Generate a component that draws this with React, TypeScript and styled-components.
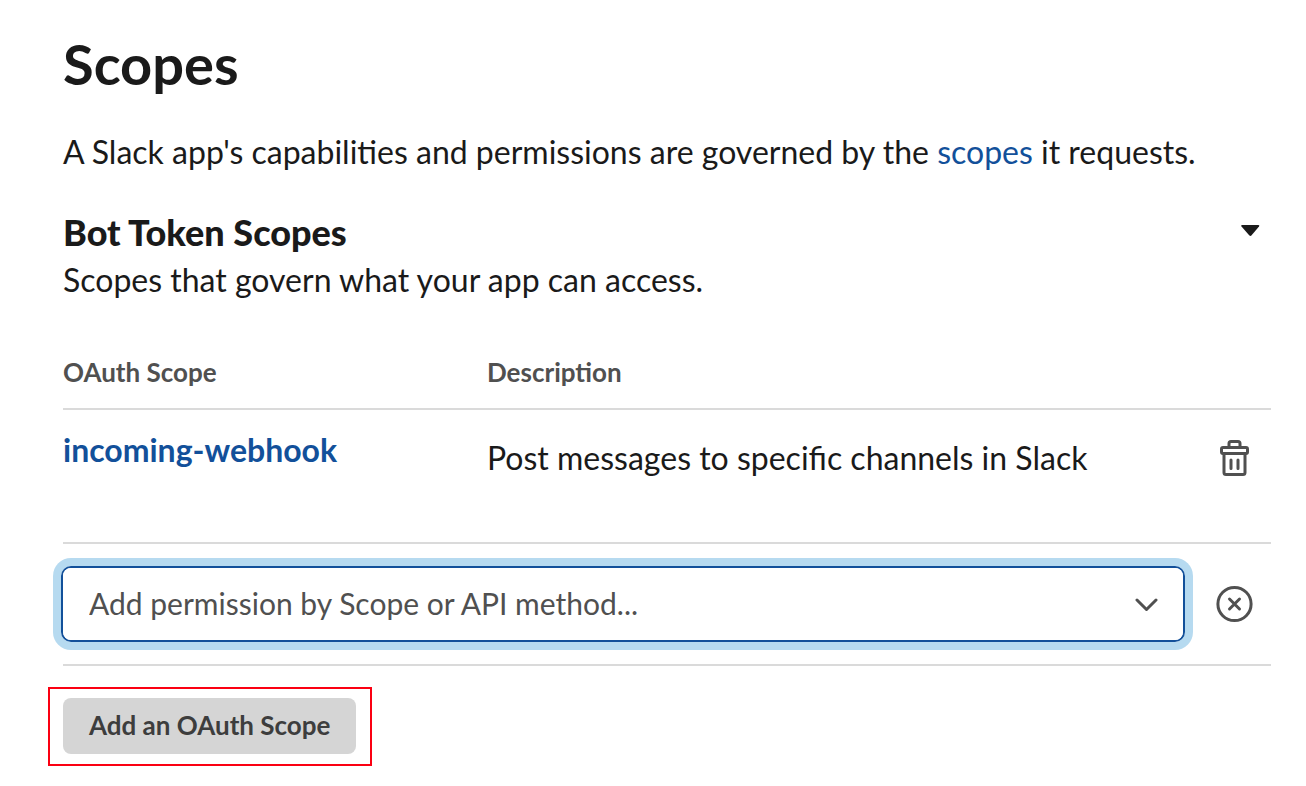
import React from "react";
import styled, { createGlobalStyle } from "styled-components";

const GlobalStyle = createGlobalStyle`
  * { box-sizing: border-box; }
  body {
    margin: 0;
    background: #fff;
    color: #1a1a1a;
    font-family: Lato, "Open Sans", sans-serif;
    font-size: 32px;
    line-height: 48px;
  }
`;

const Page = styled.main`
  padding: 28px 35px 20px 63px;
`;

const Title = styled.h1`
  margin: 0;
  font-size: 56px;
  line-height: 72px;
  font-weight: 700;
`;

const Text = styled.p`
  margin: 0;
`;

const Intro = styled(Text)`
  margin-top: 28px;
`;

const Link = styled.a<{ $strong?: boolean }>`
  color: #12509a;
  text-decoration: none;
  font-weight: ${(p) => (p.$strong ? 700 : 400)};
`;

const SectionHeader = styled.div`
  display: flex;
  align-items: center;
  justify-content: space-between;
  margin-top: 32px;
  padding-right: 11px;
`;

const SectionTitle = styled.h2`
  margin: 0;
  font-size: 36px;
  line-height: 48px;
  font-weight: 900;
`;

const IconButton = styled.button`
  display: inline-flex;
  padding: 0;
  border: 0;
  background: none;
  color: #505050;
  vertical-align: top;
  cursor: pointer;
`;

const CollapseButton = styled(IconButton)`
  padding-bottom: 2px;
`;

const Table = styled.table`
  width: 100%;
  margin-top: 44px;
  table-layout: fixed;
  border-collapse: separate;
  border-spacing: 0;
`;

const HeaderCell = styled.th<{ $width?: number }>`
  width: ${(p) => (p.$width ? `${p.$width}px` : "auto")};
  height: 62px;
  padding: 0 0 12px;
  border-bottom: 2px solid #dadada;
  color: #505050;
  font-size: 26px;
  line-height: 32px;
  font-weight: 700;
  text-align: left;
`;

const Cell = styled.td<{ $top: number; $height: number; $center?: boolean }>`
  height: ${(p) => p.$height}px;
  padding: ${(p) => p.$top}px 0 0;
  border-bottom: 2px solid #dadada;
  vertical-align: top;
  text-align: ${(p) => (p.$center ? "center" : "left")};
`;

const SelectBox = styled.div`
  display: grid;
  align-items: center;
  margin: 0 12px 0 -2px;
  border: 2px solid #12509a;
  border-radius: 10px;
  box-shadow: 0 0 0 8px #b6daf0;
  color: #505050;

  > * {
    grid-area: 1 / 1;
  }
  > svg {
    justify-self: end;
    margin: 2px 24px 0 0;
    pointer-events: none;
  }
`;

const Select = styled.select`
  width: 100%;
  height: 72px;
  padding: 0 64px 2px 26px;
  border: 0;
  border-radius: 8px;
  outline: 0;
  appearance: none;
  background: #fff;
  color: inherit;
  font: inherit;
  font-size: 30px;
`;

const Highlight = styled.div`
  width: fit-content;
  margin: 21px 0 0 -15px;
  padding: 9px 14px 10px 13px;
  border: 2px solid #fb0012;
`;

const AddButton = styled.button`
  display: block;
  height: 56px;
  padding: 0 26px 2px;
  border: 0;
  border-radius: 8px;
  background: #d5d5d5;
  color: #3d3d3d;
  font: inherit;
  font-size: 26px;
  line-height: 32px;
  font-weight: 700;
  cursor: pointer;
`;

const CaretIcon = () => (
  <svg width="20" height="12" viewBox="0 0 20 12" aria-hidden="true">
    <path d="M2 0H18.4Q20 0 19 1.6L11.6 10.3Q10.4 11.5 9.2 10.3L1.5 1.6Q0.5 0 2 0Z" fill="#1a1a1a" />
  </svg>
);

const TrashIcon = () => (
  <svg width="30" height="36" viewBox="0 0 30 36" fill="none" stroke="currentColor" strokeWidth="3" strokeLinecap="round" strokeLinejoin="round" aria-hidden="true">
    <path d="M10 6.5V3.5Q10 1.5 12 1.5H19Q21 1.5 21 3.5V6.5" />
    <rect x="2.5" y="7.5" width="26" height="6" rx="1.5" />
    <path d="M5 14V32.5Q5 34.5 7 34.5H24Q26 34.5 26 32.5V14" />
    <path d="M12 20V28.5M19 20V28.5" />
  </svg>
);

const ChevronIcon = () => (
  <svg width="24" height="14" viewBox="0 0 24 14" fill="none" stroke="currentColor" strokeWidth="3" strokeLinecap="round" strokeLinejoin="round" aria-hidden="true">
    <path d="M2 2L11.5 11.5L21 2" />
  </svg>
);

const CloseCircleIcon = () => (
  <svg width="38" height="38" viewBox="0 0 38 38" fill="none" stroke="currentColor" strokeWidth="3" strokeLinecap="round" aria-hidden="true">
    <circle cx="19.5" cy="19" r="16.6" />
    <path d="M14.5 14L24.5 24M24.5 14L14.5 24" />
  </svg>
);

export default function App() {
  return (
    <>
      <GlobalStyle />
      <Page>
        <Title>Scopes</Title>
        <Intro>
          A Slack app's capabilities and permissions are governed by the <Link href="#scopes">scopes</Link> it requests.
        </Intro>
        <SectionHeader>
          <SectionTitle>Bot Token Scopes</SectionTitle>
          <CollapseButton type="button" aria-label="Collapse section" aria-expanded="true">
            <CaretIcon />
          </CollapseButton>
        </SectionHeader>
        <Text>Scopes that govern what your app can access.</Text>

        <Table>
          <thead>
            <tr>
              <HeaderCell scope="col" $width={424}>OAuth Scope</HeaderCell>
              <HeaderCell scope="col">Description</HeaderCell>
              <HeaderCell $width={74} />
            </tr>
          </thead>
          <tbody>
            <tr>
              <Cell $top={16} $height={134}>
                <Link href="#incoming-webhook" $strong>incoming-webhook</Link>
              </Cell>
              <Cell $top={24} $height={134}>Post messages to specific channels in Slack</Cell>
              <Cell $top={30} $height={134} $center>
                <IconButton type="button" aria-label="Delete scope">
                  <TrashIcon />
                </IconButton>
              </Cell>
            </tr>
            <tr>
              <Cell colSpan={2} $top={22} $height={122}>
                <SelectBox>
                  <Select aria-label="Permission" defaultValue="">
                    <option value="">Add permission by Scope or API method...</option>
                  </Select>
                  <ChevronIcon />
                </SelectBox>
              </Cell>
              <Cell $top={41} $height={122} $center>
                <IconButton type="button" aria-label="Cancel">
                  <CloseCircleIcon />
                </IconButton>
              </Cell>
            </tr>
          </tbody>
        </Table>

        <Highlight>
          <AddButton type="button">Add an OAuth Scope</AddButton>
        </Highlight>
      </Page>
    </>
  );
}
